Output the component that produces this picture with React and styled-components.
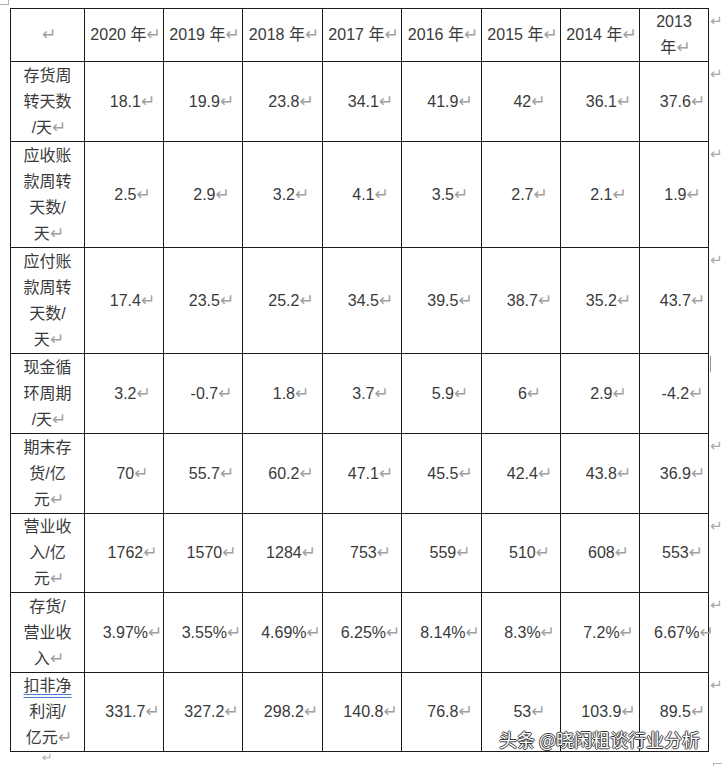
import styled, { createGlobalStyle } from 'styled-components'

const GlobalStyle = createGlobalStyle`
    html, body {
        margin: 0;
        padding: 0;
        background: #ffffff;
    }
    body {
        font-family: "Liberation Sans", "Noto Sans CJK SC", sans-serif;
    }
`

const years = ['2020', '2019', '2018', '2017', '2016', '2015', '2014', '2013']
const colWidths = [74, 79, 79, 80, 79, 80, 79, 79, 69]

const rows = [
    { label: ['存货周', '转天数', '/天'], height: 79, values: ['18.1', '19.9', '23.8', '34.1', '41.9', '42', '36.1', '37.6'] },
    { label: ['应收账', '款周转', '天数/', '天'], height: 105, values: ['2.5', '2.9', '3.2', '4.1', '3.5', '2.7', '2.1', '1.9'] },
    { label: ['应付账', '款周转', '天数/', '天'], height: 105, values: ['17.4', '23.5', '25.2', '34.5', '39.5', '38.7', '35.2', '43.7'] },
    { label: ['现金循', '环周期', '/天'], height: 79, values: ['3.2', '-0.7', '1.8', '3.7', '5.9', '6', '2.9', '-4.2'], bar: true },
    { label: ['期末存', '货/亿', '元'], height: 79, values: ['70', '55.7', '60.2', '47.1', '45.5', '42.4', '43.8', '36.9'] },
    { label: ['营业收', '入/亿', '元'], height: 78, values: ['1762', '1570', '1284', '753', '559', '510', '608', '553'] },
    { label: ['存货/', '营业收', '入'], height: 79, values: ['3.97%', '3.55%', '4.69%', '6.25%', '8.14%', '8.3%', '7.2%', '6.67%'] },
    { label: ['扣非净', '利润/', '亿元'], height: 77, values: ['331.7', '327.2', '298.2', '140.8', '76.8', '53', '103.9', '89.5'], spell: true },
]

const Page = styled.div`
    position: relative;
    width: 722px;
    height: 766px;
    overflow: hidden;
    color: #3a3a3a;
`

const TopMarkRow = styled.div`
    height: 8px;
    display: flex;
`

const Corner = styled.div`
    width: 8px;
    height: 4px;
    border-right: 1px solid #b0b0b0;
    border-bottom: 1px solid #b0b0b0;
`

const Sheet = styled.table`
    margin-left: 10px;
    border-collapse: collapse;
    table-layout: fixed;
    width: 712px;
`

const Cell = styled.td`
    border: 1px solid #1a1a1a;
    padding: ${(p) => (p.$num ? '0 0 0 14px' : '0 4px')};
    height: ${(p) => p.$h}px;
    text-align: center;
    vertical-align: middle;
    font-size: 16px;
    line-height: 26px;
    color: #3a3a3a;
    white-space: nowrap;
`

const OuterMark = styled.td`
    border: none;
    padding: 2px 0 0 1px;
    vertical-align: top;
    font-family: "DejaVu Sans", sans-serif;
    font-size: 15px;
    line-height: 20px;
    color: #a8a8a8;
    white-space: nowrap;
`

const Bar = styled.span`
    display: inline-block;
    width: 1px;
    height: 16px;
    background: #9a9a9a;
    vertical-align: top;
`

const Mark = styled.span`
    font-family: "DejaVu Sans", sans-serif;
    font-size: 17px;
    line-height: 0;
    letter-spacing: -3px;
    color: #a0a0a0;
`

const Spell = styled.span`
    text-decoration-line: underline;
    text-decoration-style: double;
    text-decoration-color: #4a78d8;
    text-underline-offset: 3px;
`

const BottomRow = styled.div`
    display: flex;
    justify-content: space-between;
    align-items: flex-start;
    padding: 0 0 0 42px;
`

const BottomMark = styled.span`
    font-family: "DejaVu Sans", sans-serif;
    font-size: 13px;
    line-height: 12px;
    color: #b0b0b0;
`

const CornerBottom = styled.div`
    width: 8px;
    height: 6px;
    margin-top: 11px;
    border-left: 1px solid #b0b0b0;
    border-top: 1px solid #b0b0b0;
`

const Watermark = styled.div`
    position: absolute;
    left: 499px;
    top: 726px;
    font-family: "Noto Sans CJK SC", sans-serif;
    font-size: 18px;
    line-height: 26px;
    color: #ffffff;
    text-shadow: 1px 0 0 #3a3a3a, -1px 0 0 #3a3a3a, 0 1px 0 #3a3a3a, 0 -1px 0 #3a3a3a;
    white-space: nowrap;
`

function Lines({ lines, spell }) {
    return lines.map((line, i) => {
        const last = i === lines.length - 1
        return (
            <div key={i}>
                {spell && i === 0 ? <Spell>{line}</Spell> : line}
                {last && <Mark>↵</Mark>}
            </div>
        )
    })
}

export default function App() {
    return (
        <Page>
            <GlobalStyle />
            <TopMarkRow>
                <Corner />
            </TopMarkRow>
            <Sheet>
                <colgroup>
                    {colWidths.map((w, i) => (
                        <col key={i} style={{ width: w }} />
                    ))}
                    <col style={{ width: 14 }} />
                </colgroup>
                <tbody>
                    <tr>
                        <Cell $h={52}><Mark>↵</Mark></Cell>
                        {years.map((y) =>
                            y === '2013' ? (
                                <Cell key={y} $h={52}>
                                    <div>2013</div>
                                    <div>年<Mark>↵</Mark></div>
                                </Cell>
                            ) : (
                                <Cell key={y} $h={52}>{y} 年<Mark>↵</Mark></Cell>
                            )
                        )}
                        <OuterMark>↵</OuterMark>
                    </tr>
                    {rows.map((row, r) => (
                        <tr key={r}>
                            <Cell $h={row.height}>
                                <Lines lines={row.label} spell={row.spell} />
                            </Cell>
                            {row.values.map((v, i) => (
                                <Cell key={i} $h={row.height} $num>{v}<Mark>↵</Mark></Cell>
                            ))}
                            <OuterMark>{row.bar ? <Bar /> : '↵'}</OuterMark>
                        </tr>
                    ))}
                </tbody>
            </Sheet>
            <BottomRow>
                <BottomMark>↵</BottomMark>
                <CornerBottom />
            </BottomRow>
            <Watermark>头条 @晓闲粗谈行业分析</Watermark>
        </Page>
    )
}
